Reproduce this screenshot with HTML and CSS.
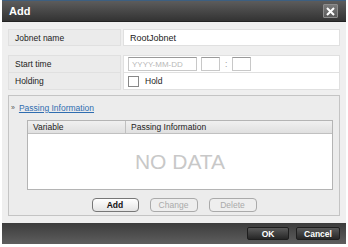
FILE: index.html
```html
<!DOCTYPE html>
<html lang="en">
<head>
    <title>Add</title>
    <link rel="stylesheet" href="styles.css">
</head>
<body>
    <div class="dialog">
        <div class="titlebar">
            <span class="title">Add</span>
            <button class="close">
                <svg width="9" height="9" viewBox="0 0 9 9"><path d="M1 1L8 8M8 1L1 8" stroke="#fff" stroke-width="2"/></svg>
            </button>
        </div>
        <div class="content">
            <div class="row single">
                <div class="label">Jobnet name</div>
                <div class="value">RootJobnet</div>
            </div>
            <div class="group">
                <div class="row">
                    <div class="label">Start time</div>
                    <div class="value">
                        <span class="field date">YYYY-MM-DD</span>
                        <span class="field small"></span>
                        <span class="colon">:</span>
                        <span class="field small"></span>
                    </div>
                </div>
                <div class="row">
                    <div class="label">Holding</div>
                    <div class="value">
                        <span class="check"></span>
                        <span>Hold</span>
                    </div>
                </div>
            </div>
            <div class="panel">
                <div class="toggle">
                    <span class="arrow">&raquo;</span>
                    <a href="#" class="link">Passing Information</a>
                </div>
                <div class="table">
                    <div class="thead">
                        <div class="th first">Variable</div>
                        <div class="th">Passing Information</div>
                    </div>
                    <div class="tbody">NO DATA</div>
                </div>
                <div class="actions">
                    <button class="btn">Add</button>
                    <button class="btn off">Change</button>
                    <button class="btn off">Delete</button>
                </div>
            </div>
        </div>
        <div class="footer">
            <button class="dark ok">OK</button>
            <button class="dark cancel">Cancel</button>
        </div>
    </div>
</body>
</html>
```

FILE: styles.css
```css
body{
    margin: 0;
    background-color: #ffffff;
    font-family: "Liberation Sans", Arial, sans-serif;
    font-size: 8.5px;
    color: #222222;
}
.dialog{
    margin-left: 2px;
    width: 344px;
    height: 244px;
    background-color: #efefef;
    display: flex;
    flex-direction: column;
}
.titlebar{
    height: 22px;
    box-sizing: border-box;
    display: flex;
    align-items: center;
    justify-content: space-between;
    padding: 0 8px 0 7px;
    background: linear-gradient(#5c5c5c, #333333);
    border-top: 1px solid #3d5f80;
    border-bottom: 1px solid #222222;
}
.title{
    color: #ffffff;
    font-weight: bold;
    font-size: 11px;
}
.close{
    width: 15px;
    height: 14px;
    padding: 0;
    display: flex;
    align-items: center;
    justify-content: center;
    background: linear-gradient(#7a7a7a, #5a5a5a);
    border: 1px solid #8c8c8c;
    border-radius: 1px;
}
.content{
    flex: 1;
    padding: 7px 6px 0 6px;
}
.row{
    display: grid;
    grid-template-columns: 113px 1fr;
    gap: 2px;
    height: 17px;
}
.label{
    background-color: #ebebeb;
    border: 1px solid #e0e0e0;
    padding-left: 6px;
    display: flex;
    align-items: center;
}
.value{
    background-color: #ffffff;
    border: 1px solid #e0e0e0;
    padding-left: 4px;
    display: flex;
    align-items: center;
    gap: 4px;
}
.single .value{
    padding-left: 6px;
    font-size: 9px;
}
.group{
    margin-top: 9px;
}
.group .row:first-child{
    height: 18px;
}
.group .row + .row .label,
.group .row + .row .value{
    border-top: none;
}
.field{
    height: 14px;
    box-sizing: border-box;
    border: 1px solid #c8c8c8;
    border-top-color: #9a9a9a;
    background-color: #ffffff;
    color: #b8b8b8;
    font-size: 8px;
    display: flex;
    align-items: center;
    padding-left: 3px;
}
.date{
    width: 69px;
}
.small{
    width: 19px;
}
.colon{
    color: #999999;
    margin: 0 1px;
}
.check{
    width: 11px;
    height: 11px;
    box-sizing: border-box;
    border: 1px solid #888888;
    background-color: #ffffff;
    margin-right: 2px;
}
.panel{
    margin-top: 5px;
    height: 121px;
    box-sizing: border-box;
    border: 1px solid #c4c4c4;
    background-color: #ececec;
    display: flex;
    flex-direction: column;
}
.toggle{
    height: 23px;
    display: flex;
    align-items: center;
    gap: 4px;
    padding-left: 2px;
    padding-bottom: 1px;
}
.arrow{
    color: #555555;
    font-size: 7px;
}
.link{
    color: #2f6db0;
    text-decoration: underline;
}
.table{
    margin: 0 6px 0 18px;
    border: 1px solid #b4b4b4;
    background-color: #ffffff;
}
.thead{
    display: flex;
    height: 12px;
    background: linear-gradient(#f0f0f0, #e0e0e0);
    border-bottom: 1px solid #c0c0c0;
}
.th{
    display: flex;
    align-items: center;
    padding-left: 5px;
    color: #222222;
}
.first{
    width: 92px;
    border-right: 1px solid #c0c0c0;
}
.tbody{
    height: 55px;
    display: flex;
    align-items: center;
    justify-content: center;
    font-size: 21px;
    color: #c8c8c8;
}
.actions{
    display: flex;
    justify-content: center;
    gap: 11px;
    margin-top: 8px;
}
.btn{
    width: 47px;
    height: 14px;
    padding: 0;
    font-family: "Liberation Sans", Arial, sans-serif;
    font-size: 8.5px;
    font-weight: bold;
    color: #111111;
    background: linear-gradient(#ffffff, #e4e4e4);
    border: 1px solid #777777;
    border-radius: 4px;
}
.btn.off{
    width: 48px;
    color: #aaaaaa;
    font-weight: normal;
    border-color: #aaaaaa;
    background: #eeeeee;
}
.footer{
    height: 21px;
    margin-top: 7px;
    display: flex;
    align-items: center;
    justify-content: flex-end;
    gap: 7px;
    padding-right: 6px;
    background: linear-gradient(#3c3c3c, #5e5e5e);
}
.dark{
    height: 13px;
    padding: 0;
    font-family: "Liberation Sans", Arial, sans-serif;
    font-size: 8.5px;
    font-weight: bold;
    color: #ffffff;
    background: linear-gradient(#5a5a5a, #262626);
    border: 1px solid #1e1e1e;
    border-radius: 2px;
}
.ok{
    width: 42px;
}
.cancel{
    width: 44px;
}
```
